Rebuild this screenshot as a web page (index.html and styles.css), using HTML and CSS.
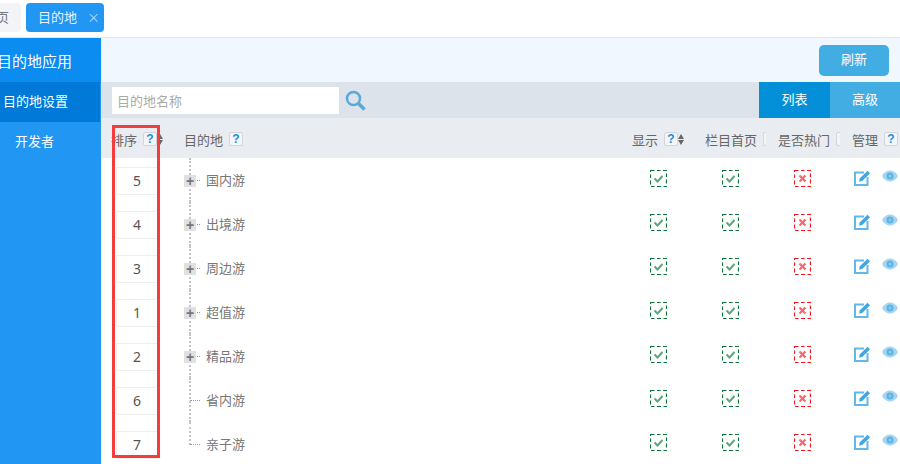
FILE: index.html
```html
<!DOCTYPE html>
<html lang="zh-CN">
<head>
  <meta charset="UTF-8">
  <title>目的地设置</title>
  <link rel="stylesheet" href="styles.css">
</head>
<body>
  <svg class="defs" width="0" height="0">
    <symbol id="i-yes" viewBox="0 0 17 17">
      <rect x="0.5" y="0.5" width="16" height="16" fill="none" stroke="#0a7436" stroke-width="1.200" stroke-dasharray="4 2.500 3.500 2.500"/>
      <path d="M4.500 8.500l3 3 5-5.500" fill="none" stroke="#5aa97c" stroke-width="2"/>
    </symbol>
    <symbol id="i-no" viewBox="0 0 17 17">
      <rect x="0.5" y="0.5" width="16" height="16" fill="none" stroke="#f5101a" stroke-width="1.200" stroke-dasharray="4 2.500 3.500 2.500"/>
      <path d="M5.500 5.500l6 6m0-6l-6 6" fill="none" stroke="#f56a70" stroke-width="2.200"/>
    </symbol>
    <symbol id="i-edit" viewBox="0 0 17 16">
      <path d="M10 2.500H1v12.500h12.500V7" fill="none" stroke="#63b8ea" stroke-width="2"/>
      <path d="M5 11.500l.7-3L13.500 .8l2.500 2.400-7.800 7.700z" fill="#3fa6e0"/>
    </symbol>
    <symbol id="i-eye" viewBox="0 0 16 12">
      <path d="M0 6c2-3.600 5-5.500 8-5.500s6 1.900 8 5.500c-2 3.600-5 5.500-8 5.500S2 9.600 0 6z" fill="#a5d5f0"/>
      <circle cx="8" cy="6" r="3.600" fill="#5db5e6"/>
      <circle cx="8" cy="6" r="1.500" fill="#8ccaee"/>
    </symbol>
  </svg>

  <div class="tabs">
    <div class="tab tab-home">首页</div>
    <div class="tab tab-on">目的地<span class="tab-x">×</span></div>
  </div>

  <div class="layout">
    <div class="side">
      <div class="side-title">目的地应用</div>
      <div class="side-item side-on">目的地设置</div>
      <div class="side-item side-sub">开发者</div>
    </div>

    <div class="main">
      <div class="top"><button class="refresh">刷新</button></div>

      <div class="bar">
        <input class="search" type="text" placeholder="目的地名称">
        <svg class="search-icon" width="21" height="21" viewBox="0 0 21 21">
          <circle cx="8.500" cy="8.500" r="6.500" fill="none" stroke="#5aa9dc" stroke-width="2.500"/>
          <path d="M13.500 13.500l6 6" stroke="#5aa9dc" stroke-width="3.500"/>
        </svg>
        <div class="views">
          <div class="view view-on">列表</div>
          <div class="view">高级</div>
        </div>
      </div>

      <div class="row head">
        <div class="cell">排序<span class="help">?</span><span class="sort"></span></div>
        <div class="cell">目的地<span class="help">?</span></div>
        <div class="cell">显示<span class="help">?</span><span class="sort"></span></div>
        <div class="cell">栏目首页<span class="help">?</span></div>
        <div class="cell">是否热门<span class="help">?</span></div>
        <div class="cell">管理<span class="help">?</span></div>
      </div>

      <div class="row">
        <div class="cell"><input class="order" value="5"></div>
        <div class="cell tree"><span class="node plus"></span>国内游</div>
        <div class="cell"><svg class="flag"><use href="#i-yes"/></svg></div>
        <div class="cell"><svg class="flag"><use href="#i-yes"/></svg></div>
        <div class="cell"><svg class="flag"><use href="#i-no"/></svg></div>
        <div class="cell ops"><svg class="edit"><use href="#i-edit"/></svg><svg class="eye"><use href="#i-eye"/></svg></div>
      </div>
      <div class="row">
        <div class="cell"><input class="order" value="4"></div>
        <div class="cell tree"><span class="node plus"></span>出境游</div>
        <div class="cell"><svg class="flag"><use href="#i-yes"/></svg></div>
        <div class="cell"><svg class="flag"><use href="#i-yes"/></svg></div>
        <div class="cell"><svg class="flag"><use href="#i-no"/></svg></div>
        <div class="cell ops"><svg class="edit"><use href="#i-edit"/></svg><svg class="eye"><use href="#i-eye"/></svg></div>
      </div>
      <div class="row">
        <div class="cell"><input class="order" value="3"></div>
        <div class="cell tree"><span class="node plus"></span>周边游</div>
        <div class="cell"><svg class="flag"><use href="#i-yes"/></svg></div>
        <div class="cell"><svg class="flag"><use href="#i-yes"/></svg></div>
        <div class="cell"><svg class="flag"><use href="#i-no"/></svg></div>
        <div class="cell ops"><svg class="edit"><use href="#i-edit"/></svg><svg class="eye"><use href="#i-eye"/></svg></div>
      </div>
      <div class="row">
        <div class="cell"><input class="order" value="1"></div>
        <div class="cell tree"><span class="node plus"></span>超值游</div>
        <div class="cell"><svg class="flag"><use href="#i-yes"/></svg></div>
        <div class="cell"><svg class="flag"><use href="#i-yes"/></svg></div>
        <div class="cell"><svg class="flag"><use href="#i-no"/></svg></div>
        <div class="cell ops"><svg class="edit"><use href="#i-edit"/></svg><svg class="eye"><use href="#i-eye"/></svg></div>
      </div>
      <div class="row">
        <div class="cell"><input class="order" value="2"></div>
        <div class="cell tree"><span class="node plus"></span>精品游</div>
        <div class="cell"><svg class="flag"><use href="#i-yes"/></svg></div>
        <div class="cell"><svg class="flag"><use href="#i-yes"/></svg></div>
        <div class="cell"><svg class="flag"><use href="#i-no"/></svg></div>
        <div class="cell ops"><svg class="edit"><use href="#i-edit"/></svg><svg class="eye"><use href="#i-eye"/></svg></div>
      </div>
      <div class="row">
        <div class="cell"><input class="order" value="6"></div>
        <div class="cell tree"><span class="node"></span>省内游</div>
        <div class="cell"><svg class="flag"><use href="#i-yes"/></svg></div>
        <div class="cell"><svg class="flag"><use href="#i-yes"/></svg></div>
        <div class="cell"><svg class="flag"><use href="#i-no"/></svg></div>
        <div class="cell ops"><svg class="edit"><use href="#i-edit"/></svg><svg class="eye"><use href="#i-eye"/></svg></div>
      </div>
      <div class="row">
        <div class="cell"><input class="order" value="7"></div>
        <div class="cell tree tree-last"><span class="node"></span>亲子游</div>
        <div class="cell"><svg class="flag"><use href="#i-yes"/></svg></div>
        <div class="cell"><svg class="flag"><use href="#i-yes"/></svg></div>
        <div class="cell"><svg class="flag"><use href="#i-no"/></svg></div>
        <div class="cell ops"><svg class="edit"><use href="#i-edit"/></svg><svg class="eye"><use href="#i-eye"/></svg></div>
      </div>
    </div>
  </div>

  <div class="mark"></div>
</body>
</html>
```

FILE: styles.css
```css
html,
body {
  margin: 0;
  height: 464px;
  overflow: hidden;
  background: #fff;
}

body {
  position: relative;
  font-family: "Noto Sans CJK SC", "Noto Sans", sans-serif;
  font-size: 13px;
  color: #666;
}

.defs {
  display: block;
  height: 0;
}

.tabs {
  display: flex;
  gap: 5px;
  height: 38px;
  padding-top: 3px;
  box-sizing: border-box;
  border-bottom: 1px solid #dfe6ef;
}

.tab {
  height: 29px;
  line-height: 27px;
  border-radius: 4px;
  white-space: nowrap;
}

.tab-home {
  width: 21px;
  direction: rtl;
  overflow: hidden;
  background: #f3f4f8;
  padding-right: 12px;
  margin-left: -12px;
  text-align: right;
  color: #777;
}

.tab-on {
  width: 78px;
  box-sizing: border-box;
  padding-left: 12px;
  background: #2196f3;
  color: #e6f3fe;
}

.tab-x {
  margin-left: 10px;
  font-size: 13px;
  color: #bcdcf8;
}

.layout {
  display: flex;
  height: 426px;
}

.side {
  width: 101px;
  flex: none;
  overflow: hidden;
  background: #2196f3;
  color: #fff;
}

.side-title {
  width: 104px;
  height: 44px;
  line-height: 46px;
  margin-left: -3px;
  font-size: 15px;
  background: #0b8cf0;
}

.side-item {
  height: 40px;
  line-height: 38px;
  white-space: nowrap;
}

.side-on {
  width: 100px;
  padding-left: 3px;
  box-sizing: border-box;
  background: #0079d8;
}

.side-sub {
  padding-left: 15px;
}

.main {
  flex: 1;
  min-width: 0;
}

.top {
  display: flex;
  justify-content: flex-end;
  align-items: center;
  height: 44px;
  padding-right: 11px;
  background: #f0f7ff;
}

.refresh {
  width: 70px;
  height: 31px;
  padding: 0 0 3px;
  border: 0;
  border-radius: 5px;
  background: #42ade2;
  color: #fff;
  font: inherit;
}

.bar {
  display: flex;
  align-items: center;
  height: 36px;
  padding-left: 11px;
  background: #dce3ea;
}

.search {
  width: 227px;
  height: 27px;
  box-sizing: border-box;
  padding: 0 5px;
  border: 0;
  background: #fff;
  font: inherit;
}

.search::placeholder {
  color: #aaa;
}

.search-icon {
  margin-left: 6px;
}

.views {
  display: flex;
  margin-left: auto;
  align-self: stretch;
}

.view {
  width: 70px;
  line-height: 34px;
  text-align: center;
  color: #fff;
  background: #42ade2;
}

.view-on {
  width: 71px;
  background: #0490d8;
}

.row {
  display: grid;
  grid-template-columns: 83px 448px 73px 73px 74px 48px;
  height: 44px;
}

.cell {
  display: flex;
  align-items: center;
  min-width: 0;
  overflow: hidden;
  white-space: nowrap;
}

.head {
  height: 40px;
  background: #e9ecf0;
}

.head .cell {
  padding-top: 2px;
}

.head .cell:first-child {
  padding-left: 10px;
}

.head .cell:nth-child(4),
.head .cell:nth-child(5) {
  margin-right: 12px;
}

.help {
  flex: none;
  width: 14px;
  height: 14px;
  margin-left: 6px;
  box-sizing: border-box;
  border: 1px solid #d4d6da;
  border-radius: 2px;
  background: #f4f5f7;
  color: #1a8fdc;
  font: bold 12px/12px "Liberation Sans", sans-serif;
  text-align: center;
}

.sort {
  flex: none;
  position: relative;
  width: 6px;
  height: 11px;
  margin-left: 0;
}

.sort::before,
.sort::after {
  content: "";
  position: absolute;
  left: 0;
  border-left: 3px solid transparent;
  border-right: 3px solid transparent;
}

.sort::before {
  top: 0;
  border-bottom: 5px solid #666;
}

.sort::after {
  bottom: 0;
  border-top: 5px solid #666;
}

.order {
  width: 42px;
  height: 28px;
  margin: 2px 0 0 15px;
  padding: 0 0 2px;
  box-sizing: border-box;
  border: 1px solid #eee;
  background: #fff;
  text-align: center;
  font: 14px "Noto Sans", sans-serif;
  color: #555;
}

.tree {
  position: relative;
  padding-bottom: 2px;
  color: #777;
}

.tree::before {
  content: "";
  position: absolute;
  left: 5px;
  top: 0;
  bottom: 0;
  border-left: 2px dotted #c4c4c4;
}

.tree-last::before {
  bottom: 21px;
}

.node {
  position: relative;
  flex: none;
  width: 22px;
  height: 12px;
  margin-top: 4px;
}

.node::after {
  content: "";
  position: absolute;
  left: 6px;
  top: 5px;
  width: 10px;
  border-top: 1px dotted #999;
}

.plus::before {
  content: "+";
  position: absolute;
  z-index: 1;
  left: 0;
  top: 0;
  width: 12px;
  height: 12px;
  background: #e0e1e3;
  color: #777;
  font: bold 14px/12px "Liberation Sans", sans-serif;
  text-align: center;
}

.flag {
  width: 17px;
  height: 17px;
  margin: -3px 0 0 18px;
}

.cell:nth-child(4) .flag {
  margin-left: 17px;
}

.cell:nth-child(5) .flag {
  margin-left: 16px;
}

.ops {
  align-items: flex-start;
  gap: 11px;
  padding-left: 2px;
}

.edit {
  flex: none;
  width: 17px;
  height: 16px;
  margin-top: 12px;
}

.eye {
  flex: none;
  width: 16px;
  height: 12px;
  margin-top: 12px;
}

.mark {
  position: absolute;
  left: 112px;
  top: 125px;
  width: 48px;
  height: 333px;
  box-sizing: border-box;
  border: 3px solid #f43c3c;
}
```
